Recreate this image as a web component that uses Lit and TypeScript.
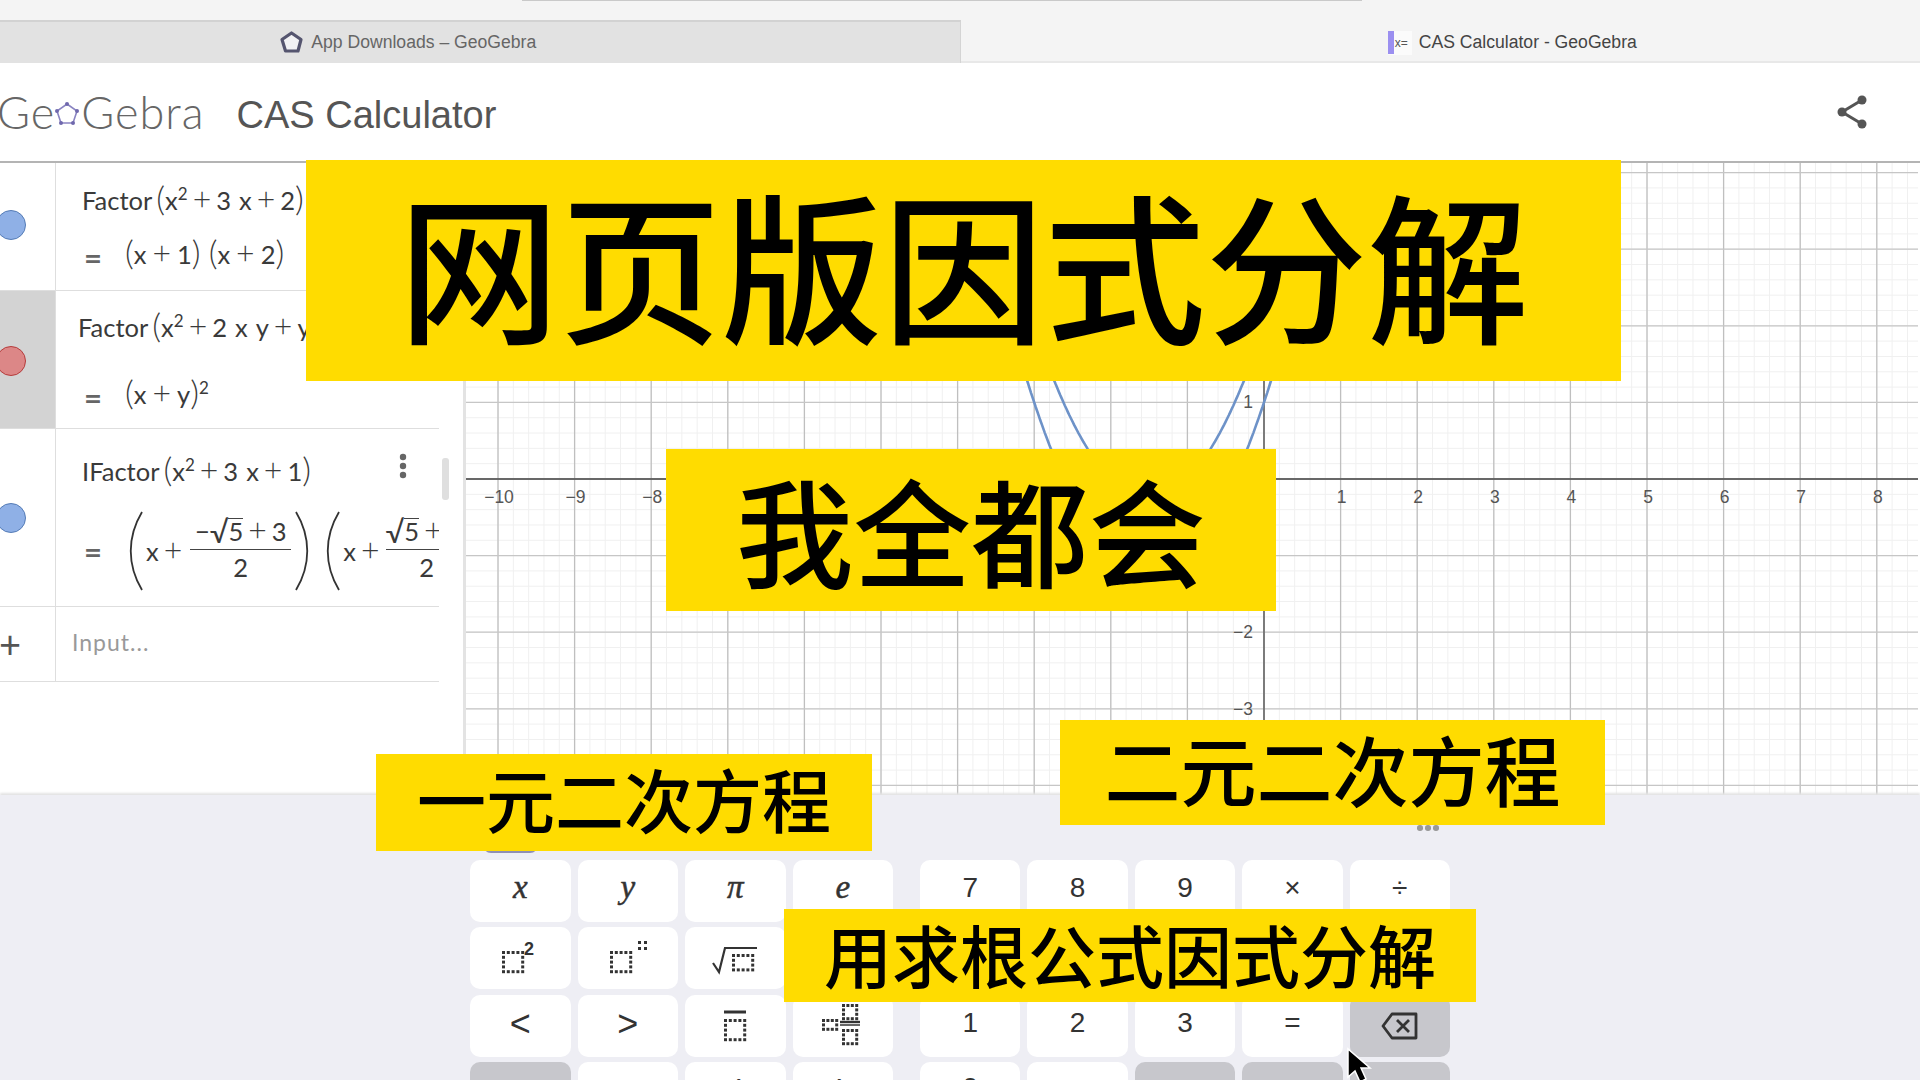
import { LitElement, html, css, svg } from "lit";
import { customElement } from "lit/decorators.js";

const X0 = 1264, Y0 = 479, U = 76.6, M = U / 5;
const range = (a: number, b: number) => Array.from({ length: b - a + 1 }, (_, i) => a + i);
const curve = (c: number) => {
  const pts: string[] = [];
  for (let x = -4.2; x <= 1.2; x += 0.02) {
    const y = x * x + 3 * x + c;
    pts.push(`${(X0 + x * U).toFixed(1)},${(Y0 - y * U).toFixed(1)}`);
  }
  return pts.join(" ");
};

/* dotted placeholder box: square dots along the perimeter */
const box = (x: number, y: number, nx: number, ny: number, p = 4.8, s = 3) => {
  const d: [number, number][] = [];
  for (let i = 0; i <= nx; i++) { d.push([x + i * p, y]); d.push([x + i * p, y + ny * p]); }
  for (let j = 1; j < ny; j++) { d.push([x, y + j * p]); d.push([x + nx * p, y + j * p]); }
  return svg`${d.map(([a, b]) => svg`<rect x=${a} y=${b} width=${s} height=${s} fill="#333"/>`)}`;
};

const bigParen = (right = false) => html`<svg class="bigp" width="16" height="80" viewBox="0 0 16 80">
  <path d=${right ? "M2 1C17 26 17 54 2 79" : "M14 1C-1 26 -1 54 14 79"} fill="none" stroke="#333" stroke-width="1.8"/></svg>`;

const op = html`<span class="op">+</span>`;
const opw = html`<span class="op w">+</span>`;
const opn = html`<span class="op n">+</span>`;
const lp = html`<span class="big">(</span>`;
const rp = html`<span class="big">)</span>`;

@customElement("app-root")
export class AppRoot extends LitElement {
  static styles = css`
    :host { display: block; width: 1920px; height: 1080px; overflow: hidden; position: relative; background: #fff;
      font-family: "Liberation Sans", Arial, sans-serif; }
    .page { display: flex; flex-direction: column; height: 1080px; }
    .strip { height: 20px; background: #f4f4f4; display: flex; justify-content: center; flex: none; }
    .strip i { display: block; width: 840px; height: 1px; background: #c9c9c9; margin-left: -36px; }
    .tabs { height: 43px; flex: none; display: flex; box-sizing: border-box; }
    .tab { flex: 1; display: flex; align-items: center; justify-content: center; font-size: 17.6px; box-sizing: border-box; }
    .tab.off { background: #e2e2e2; color: #666; border-top: 2px solid #d2d2d2; border-right: 1px solid #d4d4d4; gap: 7px; padding-right: 144px; }
    .tab.on { background: #f4f4f4; color: #444; box-shadow: inset 0 -2px 0 #e8e8e8; gap: 7px; padding-left: 144px; padding-top: 2px; }
    .xicon { display: flex; align-items: center; width: 24px; height: 24px; background: #fbfbfb; font-size: 12px; color: #555; gap: 1px; }
    .xicon b { display: block; width: 6px; height: 23px; background: #9b8ff0; }
    .head { height: 100px; flex: none; box-sizing: border-box; border-bottom: 2px solid #b4b4b4; background: #fff; display: flex; align-items: center; padding-right: 52px; }
    .logo { display: flex; align-items: center; margin-left: -3px; font: 300 45px "Lato", sans-serif; color: #666; letter-spacing: 1px; }
    .logo svg { margin: 3px 0 0 -2px; }
    .title { font-size: 38px; color: #555; margin-left: 32px; padding-top: 6px; }
    .share { margin-left: auto; }
    .main { height: 632px; flex: none; display: flex; }
    .alg { width: 463px; flex: none; position: relative; background: #fff; border-right: 3px solid #e3e3e3; box-sizing: content-box; }
    .list { width: 439px; overflow: hidden; }
    .row { display: flex; border-bottom: 1.5px solid #dedede; box-sizing: border-box; position: relative; }
    .r1 { height: 128px; } .r2 { height: 138px; } .r3 { height: 178px; } .r4 { height: 75px; }
    .mc { width: 56px; flex: none; border-right: 1.5px solid #dedede; box-sizing: border-box; display: flex; align-items: center; }
    .mc.sel { background: #d3d3d3; }
    .mc.add { justify-content: flex-start; }
    .marble { width: 30px; height: 30px; border-radius: 50%; margin-left: -4px; box-sizing: border-box; }
    .blue { background: #8fb0e6; border: 1.5px solid #557cb6; }
    .red { background: #dc8787; border: 1.5px solid #b53c3c; }
    .r1 .marble { margin-top: -3px; } .r2 .marble { margin-top: 3px; } .r3 .marble { margin-top: 0; }
    .plus { font: 400 38px "Lato", sans-serif; color: #555; margin-left: -1px; margin-top: -3px; }
    .body { flex: 1; min-width: 0; padding-left: 26px; display: flex; flex-direction: column; font: 400 25.5px "Lato", sans-serif; color: #3a3a3a; white-space: pre; }
    .l { display: flex; align-items: center; height: 40px; flex: none; }
    .r1 .body { padding-top: 17px; gap: 14px; }
    .r2 .body { padding-top: 16px; gap: 27px; padding-left: 22px; }
    .r2 .l2 { margin-left: 4px; }
    .r3 .body { padding-top: 22px; gap: 20px; }
    .big { font-size: 34px; font-weight: 300; line-height: 1; margin-top: -5px; }
    .fa { margin-right: 4px; }
    .g { margin-left: 8px; }
    .g2 { margin-left: 13px; }
    .op { font-size: 32px; font-weight: 300; line-height: 1; margin: -4px 5px 0; }
    .op.w { margin: -4px 6px 0; }
    .op.n { margin: -4px 5px 0; }
    .sq { align-self: flex-start; font-size: 17px; line-height: 17px; margin-top: 5px; }
    .eq { width: 43px; flex: none; font-size: 31px; font-weight: 700; color: #666; padding-top: 6px; padding-left: 2px; box-sizing: border-box; }
    .r3 .eq { padding-top: 0; width: 46px; }
    .r3 .l2 { height: 80px; }
    .frac { display: inline-flex; flex-wrap: wrap; justify-content: center; flex: none; width: 101px; margin: -6px 3px 0 3px; }
    .frac.b { width: 82px; margin-left: 1px; justify-content: center; }
    .frac.b .num { justify-content: flex-start; }
    .num { border-bottom: 1.5px solid #444; width: 100%; display: flex; justify-content: center; align-items: center; line-height: 36px; height: 37px; }
    .den { line-height: 34px; height: 34px; }
    .rt { font-size: 30px; line-height: 30px; }
    .ov { border-top: 1.5px solid #444; line-height: 24px; display: inline-block; }
    .bigp { flex: none; margin-right: 2px; }
    .input { color: #999; font-size: 23px; letter-spacing: 1px; padding: 0 0 4px 16px; justify-content: center; box-sizing: border-box; }
    .dots { position: absolute; left: 399px; top: 24px; }
    .sb { position: absolute; left: 442px; top: 295px; width: 7px; height: 42px; background: #dfdfdf; border-radius: 3px; }
    .graph { flex: 1; min-width: 0; background: #fff; }
    .graph svg { display: block; }
    .graph text { font-family: "Liberation Sans", sans-serif; font-size: 17.5px; fill: #555; }
    .kb { flex: 1; background: #eeeef4; position: relative; display: flex; gap: 27px; padding: 65px 0 0 470px; box-shadow: 0 -2px 2px #e4e4e4; overflow: hidden; }
    .pad { display: grid; grid-auto-rows: 61.7px; gap: 5.8px 7px; flex: none; }
    .p4 { grid-template-columns: repeat(4, 100.5px); }
    .p5 { grid-template-columns: repeat(5, 100.4px); }
    .k { background: #fff; border-radius: 10px; display: flex; align-items: center; justify-content: center; color: #333; font-size: 28px; padding-bottom: 6px; box-sizing: border-box; }
    .k.gr { background: #c7c7cc; padding-bottom: 0; }
    .k.v { font: italic 400 33px "Liberation Serif", serif; -webkit-text-stroke: 0.5px #333; }
    .k.svgk { padding-bottom: 0; }
    .k.o { font-size: 36px; padding-bottom: 4px; }
    .k.par { font-size: 33px; padding-bottom: 2px; }
    .k.z { padding-bottom: 10px; }
    .pill { position: absolute; left: 483px; top: 50px; width: 55px; height: 8px; border-radius: 0 0 8px 8px; background: #8f8fb3; }
    .more { position: absolute; left: 1417px; top: 30px; display: flex; gap: 2.5px; }
    .more i { display: block; width: 5.5px; height: 5.5px; border-radius: 50%; background: #999; }
    .ban { position: absolute; box-sizing: border-box; background: #ffdc00; color: #000; display: flex; align-items: center; justify-content: center;
      font-family: "Noto Sans CJK SC", sans-serif; font-weight: 500; white-space: nowrap; line-height: 1; }
    .b1 { left: 306px; top: 160px; width: 1315px; height: 221px; font-size: 161.5px; padding-bottom: 16px; }
    .b2 { left: 666px; top: 449px; width: 610px; height: 162px; font-size: 117.5px; padding-bottom: 2px; }
    .b3 { left: 376px; top: 754px; width: 496px; height: 97px; font-size: 69px; padding-bottom: 8px; }
    .b4 { left: 1060px; top: 720px; width: 545px; height: 105px; font-size: 76px; padding-bottom: 10px; }
    .b5 { left: 784px; top: 909px; width: 692px; height: 93px; font-size: 68px; padding-bottom: 4px; }
    .cursor { position: absolute; left: 1346px; top: 1047px; }
  `;

  private graph() {
    const vs = range(-11, 9).map((i) => X0 + i * U);
    const hs = range(-5, 5).map((i) => Y0 - i * U);
    const mvs = range(-50, 45).map((i) => X0 + i * M).filter((x) => x > 465);
    const mhs = range(-25, 25).map((i) => Y0 + i * M);
    const lab = (i: number) => (i < 0 ? "\u2212" + -i : String(i));
    return svg`
      <svg width="1452" height="632" viewBox="466 163 1452 632">
        ${mvs.map((x) => svg`<line x1=${x} x2=${x} y1="163" y2="795" stroke="#f0f0f0"/>`)}
        ${mhs.map((y) => svg`<line x1="466" x2="1920" y1=${y} y2=${y} stroke="#f0f0f0"/>`)}
        ${vs.map((x) => svg`<line x1=${x} x2=${x} y1="163" y2="795" stroke="#bfbfbf" stroke-width="1.3"/>`)}
        ${hs.map((y) => svg`<line x1="466" x2="1920" y1=${y} y2=${y} stroke="#c6c6c6" stroke-width="1.3"/>`)}
        <line x1="466" x2="1920" y1=${Y0} y2=${Y0} stroke="#444" stroke-width="1.6"/>
        <line x1=${X0} x2=${X0} y1="163" y2="795" stroke="#666" stroke-width="1.6"/>
        <polyline points=${curve(2)} fill="none" stroke="#6d92c8" stroke-width="2.6"/>
        <polyline points=${curve(1)} fill="none" stroke="#6d92c8" stroke-width="2.6"/>
        ${[-10, -9, -8, 1, 2, 3, 4, 5, 6, 7, 8].map((i) => svg`<text x=${X0 + i * U + 1} y="503" text-anchor="middle">${lab(i)}</text>`)}
        ${[1, -2, -3].map((i) => svg`<text x="1253" y=${Y0 - i * U + 6} text-anchor="end">${lab(i)}</text>`)}
      </svg>`;
  }

  render() {
    const svgKey = (c: unknown, w = 56, h = 50) =>
      html`<div class="k svgk"><svg width=${w} height=${h} viewBox="0 0 56 50">${c}</svg></div>`;
    return html`
      <div class="page">
        <div class="strip"><i></i></div>
        <div class="tabs">
          <div class="tab off">
            <svg width="25" height="25" viewBox="0 0 25 25"><polygon points="12.5,3 22,9.5 19,21 6.5,21 3,9.5" fill="#f2f2f4" stroke="#55556f" stroke-width="3.2" stroke-linejoin="round"/></svg>
            <span>App Downloads – GeoGebra</span>
          </div>
          <div class="tab on">
            <span class="xicon"><b></b><span>x=</span></span>
            <span>CAS Calculator - GeoGebra</span>
          </div>
        </div>
        <div class="head">
          <div class="logo"><span>Ge</span>
            <svg width="28" height="28" viewBox="0 0 28 28"><polygon points="14,4 24,11 20,23 8,23 4,11" fill="none" stroke="#8a84c2" stroke-width="1.6"/>
              ${[[14, 4], [24, 11], [20, 23], [8, 23], [4, 11]].map(([x, y]) => svg`<circle cx=${x} cy=${y} r="2" fill="#6f68ad"/>`)}</svg>
            <span>Gebra</span></div>
          <div class="title">CAS Calculator</div>
          <svg class="share" width="32" height="36" viewBox="0 0 32 36"><g fill="#555"><circle cx="26" cy="6" r="4.5"/><circle cx="6" cy="18" r="4.5"/><circle cx="26" cy="30" r="4.5"/></g><path d="M26 6L6 18L26 30" fill="none" stroke="#555" stroke-width="3"/></svg>
        </div>
        <div class="main">
          <div class="alg">
            <div class="list">
              <div class="row r1">
                <div class="mc"><div class="marble blue"></div></div>
                <div class="body">
                  <div class="l"><span class="fa">Factor</span>${lp}<span>x</span><span class="sq">2</span>${op}<span>3</span><span class="g">x</span>${op}<span>2</span>${rp}</div>
                  <div class="l"><span class="eq">=</span>${lp}<span>x</span>${opw}<span>1</span>${rp}<span class="g"></span>${lp}<span>x</span>${opw}<span>2</span>${rp}</div>
                </div>
              </div>
              <div class="row r2">
                <div class="mc sel"><div class="marble red"></div></div>
                <div class="body">
                  <div class="l"><span class="fa">Factor</span>${lp}<span>x</span><span class="sq">2</span>${op}<span>2</span><span class="g">x</span><span class="g">y</span>${op}<span>y</span></div>
                  <div class="l l2"><span class="eq">=</span>${lp}<span>x</span>${opw}<span>y</span>${rp}<span class="sq">2</span></div>
                </div>
              </div>
              <div class="row r3">
                <div class="mc"><div class="marble blue"></div></div>
                <div class="body">
                  <div class="l"><span class="fa">IFactor</span>${lp}<span>x</span><span class="sq">2</span>${op}<span>3</span><span class="g">x</span>${op}<span>1</span>${rp}</div>
                  <div class="l l2"><span class="eq">=</span>${bigParen()}<span>x</span>${opn}<span class="frac"><span class="num"><span>−</span><span class="rt">√</span><span class="ov">5</span>${opn}<span>3</span></span><span class="den">2</span></span>${bigParen(true)}<span class="g2"></span>${bigParen()}<span>x</span>${opn}<span class="frac b"><span class="num"><span class="rt">√</span><span class="ov">5</span>${opn}<span>3</span></span><span class="den">2</span></span></div>
                </div>
                <svg class="dots" width="8" height="26" viewBox="0 0 8 26"><g fill="#666"><circle cx="4" cy="4" r="3.2"/><circle cx="4" cy="13" r="3.2"/><circle cx="4" cy="22" r="3.2"/></g></svg>
              </div>
              <div class="row r4">
                <div class="mc add"><span class="plus">+</span></div>
                <div class="body input">Input...</div>
              </div>
            </div>
            <div class="sb"></div>
          </div>
          <div class="graph">${this.graph()}</div>
        </div>
        <div class="kb">
          <div class="pill"></div>
          <div class="more"><i></i><i></i><i></i></div>
          <div class="pad p4">
            <div class="k v">x</div><div class="k v">y</div><div class="k v">π</div><div class="k v">e</div>
            ${svgKey(svg`${box(10, 18, 4, 4)}<text x="32" y="22" font-family="Liberation Sans" font-size="18" font-weight="700" fill="#333">2</text>`)}
            ${svgKey(svg`${box(10, 18, 4, 4)}${box(38, 8, 1, 1, 6)}`)}
            ${svgKey(svg`<path d="M6 30L12 39L18 15H50" fill="none" stroke="#333" stroke-width="2.2"/>${box(25, 21, 4, 3)}`)}
            ${svgKey(svg``)}
            <div class="k o">&lt;</div><div class="k o">&gt;</div>
            ${svgKey(svg`<line x1="17" x2="39" y1="11" y2="11" stroke="#333" stroke-width="3"/>${box(17, 18, 4, 4)}`)}
            ${svgKey(svg`${box(7, 18, 3, 2, 4.4)}${box(27, 3, 3, 3, 4.4)}<line x1="25" x2="45" y1="21" y2="21" stroke="#333" stroke-width="2.4"/><line x1="25" x2="45" y1="24" y2="24" stroke="#333" stroke-width="1.5"/>${box(27, 28, 3, 3, 4.4)}`)}
            <div class="k gr"></div><div class="k"></div><div class="k par">(</div><div class="k par">)</div>
          </div>
          <div class="pad p5">
            <div class="k">7</div><div class="k">8</div><div class="k">9</div><div class="k">×</div><div class="k">÷</div>
            <div class="k"></div><div class="k"></div><div class="k"></div><div class="k"></div><div class="k"></div>
            <div class="k">1</div><div class="k">2</div><div class="k">3</div><div class="k">=</div>
            <div class="k gr"><svg width="38" height="28" viewBox="0 0 38 28"><path d="M11 2H35V26H11L2 14Z" fill="none" stroke="#333" stroke-width="2.8" stroke-linejoin="round"/><path d="M16 8L28 20M28 8L16 20" stroke="#333" stroke-width="2.8"/></svg></div>
            <div class="k z">0</div><div class="k"></div><div class="k gr"></div><div class="k gr"></div><div class="k gr"></div>
          </div>
        </div>
      </div>
      <div class="ban b1">网页版因式分解</div>
      <div class="ban b2">我全都会</div>
      <div class="ban b3">一元二次方程</div>
      <div class="ban b4">二元二次方程</div>
      <div class="ban b5">用求根公式因式分解</div>
      <svg class="cursor" width="30" height="36" viewBox="0 0 30 36"><path d="M2 2L2 30L9 24L14 35L20 32L15 21L24 21Z" fill="#000" stroke="#fff" stroke-width="1.5"/></svg>
    `;
  }
}
